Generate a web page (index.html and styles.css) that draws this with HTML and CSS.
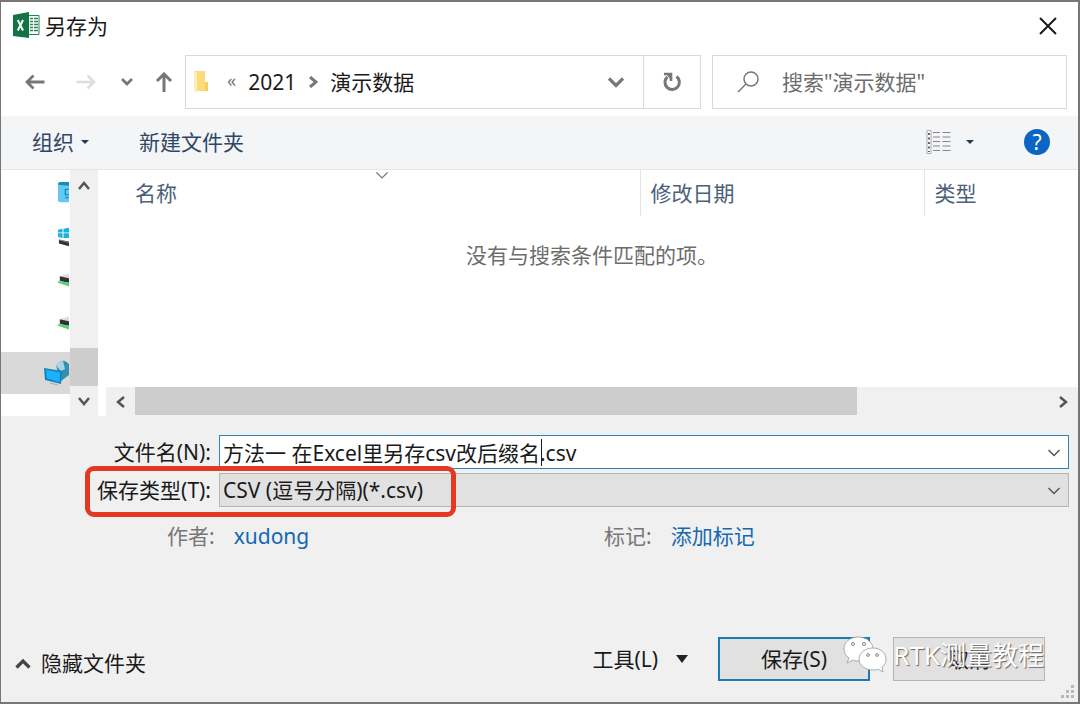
FILE: index.html
```html
<!DOCTYPE html>
<html lang="zh-CN">
<head>
<meta charset="utf-8">
<title>另存为</title>
<link rel="stylesheet" href="styles.css">
</head>
<body>
<main class="dialog">
  <header class="titlebar">
    <svg class="app-icon" width="27" height="27" viewBox="0 0 27 27" aria-hidden="true">
      <path d="M15 3.500h11v19H15z" fill="#fff" stroke="#2b8158"/>
      <path d="M17 6.500h8M17 9.500h8M17 12.500h8M17 15.500h8M17 18.500h8" stroke="#2b8158" stroke-width="1.400"/>
      <path d="M20.500 4v18" stroke="#fff"/>
      <path d="M0 3 16 0v26L0 24z" fill="#107545"/>
      <path d="M4.800 8 10 18.500M10 8 4.800 18.500" stroke="#fff" stroke-width="2"/>
    </svg>
    <h1 class="title">另存为</h1>
    <button class="icon-button close" aria-label="关闭"><svg width="18" height="18" viewBox="0 0 18 18"><path d="M1 1l16 16M17 1 1 17" fill="none" stroke="#1a1a1a" stroke-width="2"/></svg></button>
  </header>

  <nav class="navbar">
    <div class="nav-buttons">
      <button class="icon-button nav-wide" aria-label="后退"><svg width="20" height="16" viewBox="0 0 20 16"><path d="M19.500 8H2M8.500 1.500 2 8l6.500 6.500" fill="none" stroke="#777" stroke-width="2.800"/></svg></button>
      <button class="icon-button nav-wide" aria-label="前进"><svg width="20" height="16" viewBox="0 0 20 16"><path d="M.5 8H18M11.500 1.500 18 8l-6.500 6.500" fill="none" stroke="#ddd" stroke-width="2.600"/></svg></button>
      <button class="icon-button nav-narrow" aria-label="最近位置"><svg width="12" height="8" viewBox="0 0 12 8"><path d="M1 1l5 5 5-5" fill="none" stroke="#777" stroke-width="2.800"/></svg></button>
      <button class="icon-button nav-up" aria-label="上移"><svg width="18" height="20" viewBox="0 0 18 20"><path d="M9 20V2M2 9l7-7 7 7" fill="none" stroke="#777" stroke-width="3"/></svg></button>
    </div>
    <div class="address">
      <svg class="folder" width="16" height="24" viewBox="0 0 16 24" aria-hidden="true"><path d="M1 1h11v11h3v9H1z" fill="#fbdc7c"/><path d="M1 1l3 2v20l-3-2z" fill="#ffeeb5"/><path d="M12 12h3v9h-3z" fill="#f6cf58"/></svg>
      <span class="overflow">«</span>
      <span class="crumb">2021</span>
      <svg class="crumb-arrow" width="9" height="12" viewBox="0 0 9 12" aria-hidden="true"><path d="M1 1l6 5-6 5" fill="none" stroke="#777" stroke-width="3"/></svg>
      <span class="crumb">演示数据</span>
      <button class="icon-button history" aria-label="历史"><svg width="16" height="11" viewBox="0 0 16 11"><path d="M1 1.500l7 7 7-7" fill="none" stroke="#777" stroke-width="3.200"/></svg></button>
      <button class="icon-button refresh" aria-label="刷新"><svg width="20" height="20" viewBox="0 0 20 20"><path d="M14.500 4.500A7.200 7.200 0 1 1 5.500 4.800" fill="none" stroke="#777" stroke-width="3"/><path d="M2 2h7v7" fill="none" stroke="#777" stroke-width="2.600"/><path d="M5 3h4v5z" fill="#777"/></svg></button>
    </div>
    <label class="search">
      <svg width="22" height="22" viewBox="0 0 22 22" aria-hidden="true"><circle cx="14" cy="8" r="7" fill="none" stroke="#777" stroke-width="1.500"/><path d="M9 13 1 21" stroke="#777" stroke-width="1.500"/></svg>
      <input class="search-input" type="search" placeholder='搜索"演示数据"' aria-label="搜索">
    </label>
  </nav>

  <div class="toolbar">
    <button class="tool">组织<span class="caret"></span></button>
    <button class="tool new-folder">新建文件夹</button>
    <button class="icon-button view" aria-label="更改视图">
      <svg width="25" height="24" viewBox="0 0 25 24"><path d="M1 .5h4v23H1z" fill="#fff" stroke="#999" stroke-width=".8"/><path d="M3 3v19" stroke="#666" stroke-width="2" stroke-dasharray="2 2.500"/><path d="M7 2.500h7M16.500 2.500h8M7 7h7M16.500 7h8M7 11.500h7M16.500 11.500h8M7 16h7M16.500 16h8M7 20.500h7M16.500 20.500h8" stroke="#888" stroke-width="1.200"/></svg>
      <span class="caret"></span>
    </button>
    <button class="help" aria-label="帮助">?</button>
  </div>

  <div class="browser">
    <aside class="tree">
      <ul class="tree-list">
        <li class="tree-item"><svg width="11" height="26" viewBox="0 0 12 26"><path d="M0 3q0-2 3-2h9v22H2q-2 0-2-2z" fill="#62c9f2"/><path d="M0 4q0-3 3-3h9v4z" fill="#168bb3"/><path d="M12 9H8v6h4M8 18h4" fill="none" stroke="#168bc5" stroke-width="1.500"/></svg></li>
        <li class="tree-item"><svg width="11" height="22" viewBox="0 0 12 22"><path d="M0 3l5-1v4H0zM6 2l6-1v5H6zM0 7h5v5l-5-1zM6 7h6v5H6z" fill="#1db2df"/><path d="M1 14l11 2v5L1 18z" fill="#333"/><path d="M1 14l11 3" stroke="#888"/></svg></li>
        <li class="tree-item"><svg width="11" height="16" viewBox="0 0 12 16"><path d="M2 4l10-3v5z" fill="#ddd"/><path d="M2 4l10 2v5L2 9z" fill="#333"/><path d="M0 9l12 2v4L0 11z" fill="#4fd66c"/></svg></li>
        <li class="tree-item"><svg width="11" height="16" viewBox="0 0 12 16"><path d="M2 4l10-3v5z" fill="#ddd"/><path d="M2 4l10 2v5L2 9z" fill="#333"/><path d="M0 9l12 2v4L0 11z" fill="#4fd66c"/></svg></li>
        <li class="tree-item selected"><svg width="25" height="26" viewBox="0 0 25 26"><path d="M12 6q4-6 9-5l4 3v11l-8 6z" fill="#318fb2"/><path d="M12 6q3-5 7-5l2 8-4 2z" fill="#a5d5e5"/><path d="M0 8l18 3-1 13L1 20z" fill="#1284c0"/><path d="M2 10l14 2.500-.5 9.500L3 18.500z" fill="#1fb0fb"/><path d="M6 23l8 2" stroke="#aaa"/></svg></li>
      </ul>
      <div class="vscroll">
        <button class="icon-button vscroll-button" aria-label="向上滚动"><svg width="12" height="9" viewBox="0 0 12 9"><path d="M1 8l5-6 5 6" fill="none" stroke="#555" stroke-width="2.500"/></svg></button>
        <div class="vthumb"></div>
        <button class="icon-button vscroll-button" aria-label="向下滚动"><svg width="12" height="9" viewBox="0 0 12 9"><path d="M1 1l5 6 5-6" fill="none" stroke="#555" stroke-width="2.500"/></svg></button>
      </div>
    </aside>
    <section class="files">
      <table class="file-table">
        <thead>
          <tr>
            <th class="col-name">名称<svg class="sort" width="12" height="7" viewBox="0 0 12 7" aria-hidden="true"><path d="M.5.5 6 6l5.500-5.500" fill="none" stroke="#777" stroke-width="1.200"/></svg></th>
            <th class="col-date">修改日期</th>
            <th class="col-type">类型</th>
          </tr>
        </thead>
      </table>
      <p class="empty">没有与搜索条件匹配的项。</p>
      <div class="hscroll">
        <button class="icon-button hscroll-button" aria-label="向左滚动"><svg width="9" height="12" viewBox="0 0 9 12"><path d="M8 1 2 6l6 5" fill="none" stroke="#555" stroke-width="2.500"/></svg></button>
        <div class="htrack"><div class="hthumb"></div></div>
        <button class="icon-button hscroll-button" aria-label="向右滚动"><svg width="9" height="12" viewBox="0 0 9 12"><path d="M1 1l6 5-6 5" fill="none" stroke="#555" stroke-width="2.500"/></svg></button>
      </div>
    </section>
  </div>

  <form class="form">
    <div class="fields">
      <label class="label" for="filename">文件名(N):</label>
      <div class="combo combo-edit">
        <input class="combo-control" id="filename" type="text" value="方法一 在Excel里另存csv改后缀名.csv">
        <span class="text-cursor"></span>
        <svg class="combo-arrow" width="12" height="8" viewBox="0 0 12 8" aria-hidden="true"><path d="M.5 1 6 6.500 11.500 1" fill="none" stroke="#555" stroke-width="1.500"/></svg>
      </div>
      <label class="label" for="filetype">保存类型(T):</label>
      <div class="combo">
        <select class="combo-control" id="filetype"><option>CSV (逗号分隔)(*.csv)</option></select>
        <svg class="combo-arrow" width="12" height="8" viewBox="0 0 12 8" aria-hidden="true"><path d="M.5 1 6 6.500 11.500 1" fill="none" stroke="#555" stroke-width="1.500"/></svg>
      </div>
      <div class="highlight"></div>
    </div>
    <div class="meta">
      <div class="meta-item author"><span class="meta-label">作者:</span><a class="meta-link" href="#">xudong</a></div>
      <div class="meta-item"><span class="meta-label">标记:</span><a class="meta-link" href="#">添加标记</a></div>
    </div>
    <footer class="footer">
      <button class="plain hide-folders" type="button"><svg width="16" height="11" viewBox="0 0 16 11" aria-hidden="true"><path d="M1.500 9.500 8 3l6.500 6.500" fill="none" stroke="#444" stroke-width="3.200"/></svg>隐藏文件夹</button>
      <button class="plain tools" type="button">工具(L)<span class="caret caret-large"></span></button>
      <button class="action primary" type="button">保存(S)</button>
      <button class="action" type="button">取消</button>
      <div class="watermark">
        <svg width="44" height="38" viewBox="0 0 44 38" aria-hidden="true">
          <g stroke="#999" stroke-width=".8">
            <path d="M15 1C7 1 1 6 1 13c0 4 2 7 5 9l-2 5 6-3c2 1 4 1 6 1 8 0 14-5 14-12S23 1 15 1z" fill="#fff"/>
            <path d="M30 12c-8 0-14 5-14 11s6 11 14 11c2 0 4 0 5-1l5 3-1-5c3-2 4-5 4-8 0-6-6-11-13-11z" fill="#fff"/>
            <g fill="#e8e8e8" stroke="#777"><circle cx="10" cy="8" r="1.600"/><circle cx="21" cy="8" r="1.600"/><circle cx="25" cy="19" r="1.400"/><circle cx="34" cy="19" r="1.400"/></g>
          </g>
        </svg>
        <span class="watermark-text">RTK测量教程</span>
      </div>
    </footer>
  </form>
  <svg class="grip" width="14" height="14" viewBox="0 0 14 14" aria-hidden="true"><path d="M10 0h3v3h-3zM5 5h3v3H5zM10 5h3v3h-3zM0 10h3v3H0zM5 10h3v3H5zM10 10h3v3h-3z" fill="#b8b8b8"/></svg>
</main>
</body>
</html>
```
FILE: styles.css
```css
* { box-sizing: border-box; }

body {
  margin: 0;
  font-family: "Noto Sans", "Noto Sans CJK SC", sans-serif;
  font-size: 21px;
  line-height: 30px;
  color: #1a1a1a;
}

button, input, select {
  font: inherit;
  color: inherit;
  border: 0;
  padding: 0;
  margin: 0;
  background: none;
}

svg { display: block; flex: none; }

.dialog {
  position: relative;
  display: flex;
  flex-direction: column;
  min-height: 100vh;
  border: 2px solid #777;
  border-left-width: 1px;
  background: #fff;
}

.icon-button {
  display: flex;
  align-items: center;
  justify-content: center;
  flex: none;
}

.titlebar {
  display: flex;
  align-items: center;
  height: 47px;
  padding: 0 21px 0 12px;
}
.title {
  flex: 1;
  margin: 0 0 0 5px;
  font-size: 21px;
  font-weight: 400;
}

.navbar {
  display: flex;
  gap: 11px;
  height: 67px;
  padding: 6px 11px 7px 8px;
}
.nav-buttons {
  display: flex;
  margin-right: -11px;
}
.nav-wide { width: 51px; }
.nav-narrow { width: 32px; }
.nav-up { width: 42px; }

.address {
  display: flex;
  flex: 1;
  align-items: center;
  border: 1px solid #d9d9d9;
  padding-left: 7px;
}
.overflow {
  margin: 0 12px 4px 18px;
  font-size: 18px;
  color: #777;
}
.crumb-arrow { margin: 0 12px 0 13px; }
.history {
  width: 54px;
  height: 100%;
  margin-left: auto;
}
.refresh {
  width: 57px;
  height: 100%;
  border-left: 1px solid #d9d9d9;
}
.search {
  display: flex;
  align-items: center;
  gap: 23px;
  width: 355px;
  border: 1px solid #d9d9d9;
  padding-left: 24px;
}
.search-input {
  flex: 1;
  min-width: 0;
  outline: 0;
}
.search-input::placeholder {
  color: #6d6d6d;
  opacity: 1;
}

.toolbar {
  display: flex;
  align-items: center;
  height: 54px;
  padding: 0 28px 2px 31px;
  background: #f3f5f7;
  border-bottom: 1px solid #e3e6e9;
  color: #2f4766;
}
.tool {
  display: flex;
  align-items: center;
  gap: 7px;
}
.new-folder { margin-left: 50px; }
.caret {
  border: 4px solid transparent;
  border-top-color: #243b5a;
  border-bottom-width: 0;
}
.view {
  gap: 15px;
  margin-left: auto;
}
.help {
  width: 26px;
  height: 26px;
  margin-left: 50px;
  border-radius: 50%;
  background: #0a66c2;
  color: #fff;
  line-height: 26px;
}

.browser {
  display: flex;
  height: 246px;
}
.tree { display: flex; }
.tree-list {
  width: 69px;
  margin: 0;
  padding: 0;
  list-style: none;
}
.tree-item {
  display: flex;
  align-items: center;
  justify-content: flex-end;
  height: 43px;
  padding-right: 1px;
}
.tree-item:first-child { height: 45px; }
.selected {
  height: 42px;
  margin-top: 8px;
  background: #d9d9d9;
}
.vscroll {
  display: flex;
  flex-direction: column;
  width: 28px;
  background: #f0f0f0;
}
.vscroll-button { height: 30px; }
.vthumb {
  height: 38px;
  margin-top: auto;
  background: #cdcdcd;
}
.files {
  display: flex;
  flex: 1;
  flex-direction: column;
  margin-left: 8px;
}
.file-table {
  width: calc(100% - 19px);
  margin-left: 19px;
  table-layout: fixed;
  border-collapse: collapse;
  color: #4c607a;
}
.file-table th {
  position: relative;
  height: 46px;
  padding: 0 10px;
  font-weight: 400;
  text-align: left;
}
.col-date { width: 284px; }
.col-type { width: 154px; }
.col-date, .col-type { border-left: 1px solid #e5e5e5; }
.sort {
  position: absolute;
  top: 2px;
  left: 50%;
  margin-left: -6px;
}
.empty {
  margin: 24px 0 0;
  text-align: center;
  color: #6d6d6d;
}
.hscroll {
  display: flex;
  height: 29px;
  margin-top: auto;
  background: #f0f0f0;
}
.hscroll-button { width: 29px; }
.htrack { flex: 1; }
.hthumb {
  width: 79%;
  height: 28px;
  background: #cdcdcd;
}

.form {
  display: flex;
  flex: 1;
  flex-direction: column;
  padding-top: 19px;
  background: #f0f0f0;
}
.fields {
  position: relative;
  display: grid;
  grid-template-columns: 210px 1fr;
  gap: 4px 8px;
  padding-right: 9px;
}
.label {
  line-height: 34px;
  text-align: right;
}
.combo {
  position: relative;
  height: 34px;
  border: 1px solid #b5b5b5;
  background: #e1e1e1;
}
.combo-edit {
  border-color: #2f83ad;
  background: #fff;
}
.combo-control {
  width: 100%;
  height: 100%;
  padding: 0 30px 0 3px;
  outline: 0;
  appearance: none;
}
.combo-arrow {
  position: absolute;
  top: 13px;
  right: 8px;
  pointer-events: none;
}
.text-cursor {
  position: absolute;
  top: 3px;
  left: 321px;
  width: 1px;
  height: 27px;
  background: #1a1a1a;
}
.highlight {
  position: absolute;
  top: 31px;
  left: 84px;
  width: 371px;
  height: 51px;
  border: 5px solid #e23a22;
  border-radius: 9px;
  pointer-events: none;
}
.meta {
  display: flex;
  margin: 14px 0 24px 166px;
}
.meta-item {
  display: flex;
  gap: 19px;
}
.author { width: 437px; }
.meta-label { color: #777; }
.meta-link {
  color: #1668b0;
  text-decoration: none;
}

.footer {
  position: relative;
  display: flex;
  align-items: center;
  margin-top: auto;
  padding: 0 33px 21px 14px;
}
.plain {
  display: flex;
  align-items: center;
}
.hide-folders {
  gap: 10px;
  margin: 8px auto 0 0;
}
.tools {
  gap: 18px;
  margin-right: 30px;
}
.caret-large {
  border-width: 8px 6px 0;
  border-top-color: #222;
}
.action {
  width: 152px;
  height: 44px;
  border: 1px solid #b5b5b5;
  background: #e1e1e1;
}
.primary {
  margin-right: 23px;
  border: 2px solid #1b7cb5;
}
.watermark {
  position: absolute;
  top: -3px;
  right: 34px;
  display: flex;
  align-items: center;
  gap: 6px;
  pointer-events: none;
}
.watermark-text {
  font-size: 26px;
  line-height: 42px;
  color: #fff;
  text-shadow: 1px 1px 1px #666;
}
.grip {
  position: absolute;
  right: 3px;
  bottom: 3px;
}
```
